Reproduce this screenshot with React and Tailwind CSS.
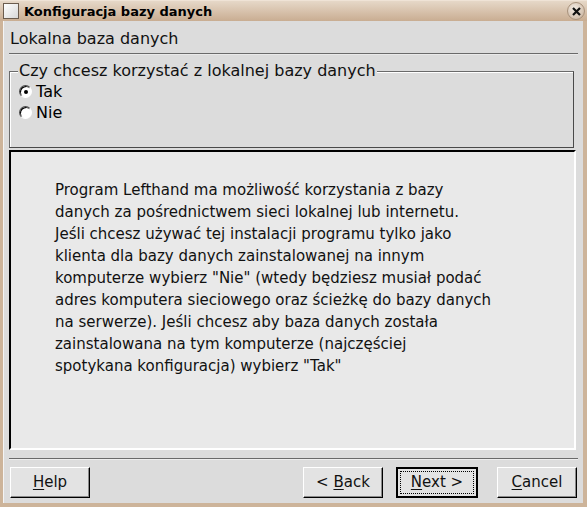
const Radio = ({ checked, label }) => (
  <div className="flex h-[21px] items-center gap-[4px]">
    <span className="relative flex h-[13px] w-[13px] items-center justify-center rounded-full border border-t-[#4a4a4a] border-l-[#4a4a4a] border-r-white border-b-white bg-white shadow-[inset_1px_1px_0_#000]">
      {checked && <span className="h-[4px] w-[4px] rounded-full bg-black" />}
    </span>
    <span className="text-[16px] leading-none text-black">{label}</span>
  </div>
);

const Button = ({ children, isDefault = false, className = "" }) => (
  <button
    type="button"
    className={`flex h-[31px] items-center justify-center bg-[#e3e3e3] text-[15px] text-[#111] ${
      isDefault
        ? "border-2 border-black p-[2px]"
        : "border border-t-white border-l-white border-r-black border-b-black shadow-[inset_-1px_-1px_0_#8a8a8a]"
    } ${className}`}
  >
    {isDefault ? (
      <span className="flex h-full w-full items-center justify-center border border-dotted border-black">
        {children}
      </span>
    ) : (
      children
    )}
  </button>
);

const Label = ({ u, rest, before = "" }) => (
  <span>
    {before}
    <span className="underline underline-offset-2">{u}</span>
    {rest}
  </span>
);

const lines = [
  "Program Lefthand ma możliwość korzystania z bazy",
  "danych za pośrednictwem sieci lokalnej lub internetu.",
  "Jeśli chcesz używać tej instalacji programu tylko jako",
  "klienta dla bazy danych zainstalowanej na innym",
  "komputerze wybierz \"Nie\" (wtedy będziesz musiał podać",
  "adres komputera sieciowego oraz ścieżkę do bazy danych",
  "na serwerze). Jeśli chcesz aby baza danych została",
  "zainstalowana na tym komputerze (najczęściej",
  "spotykana konfiguracja) wybierz \"Tak\"",
];

export default function App() {
  return (
    <div
      className="flex h-[507px] w-[587px] flex-col bg-[#cdb49a]"
      style={{ fontFamily: '"DejaVu Sans", "Liberation Sans", sans-serif' }}
    >
      {/* title bar */}
      <div className="flex h-[21px] shrink-0 items-center border-t border-[#efe3d6] bg-[linear-gradient(#e6d8c8,#c9ad92)] pl-[3px] pr-[2px]">
        <span className="h-[16px] w-[16px] border border-[#6b5c4e] bg-[linear-gradient(135deg,#ffffff,#d8d8d8)]" />
        <span className="ml-[5px] text-[13px] font-bold leading-none text-black">
          Konfiguracja bazy danych
        </span>
        <span className="ml-auto flex h-[18px] w-[18px] items-center justify-center rounded-full border border-[#a8927c] bg-[radial-gradient(circle_at_40%_35%,#f3ece4,#c4ad97)]">
          <svg width="9" height="9" viewBox="0 0 9 9">
            <path d="M1 1L8 8M8 1L1 8" stroke="#111" strokeWidth="2.2" />
          </svg>
        </span>
      </div>

      {/* body */}
      <div className="mb-[4px] ml-[3px] mr-[4px] flex flex-1 flex-col border-l border-[#f4f4f4] bg-[#dcdcdc] px-[5px]">
        <div className="pl-[1px] pt-[9px] text-[16px] leading-[18px] text-[#111]">
          Lokalna baza danych
        </div>
        <div className="mt-[5px] h-[2px] border-t border-[#6a6a6a] bg-white/40" />

        {/* group box */}
        <div className="relative mr-[4px] mt-[16px] h-[77px] border border-t-[#6a6a6a] border-l-[#6a6a6a] border-r-[#4a4a4a] border-b-[#4a4a4a] shadow-[inset_1px_1px_0_#ffffff]">
          <span className="absolute -top-[10px] left-[8px] bg-[#dcdcdc] px-[1px] text-[16px] leading-[18px] text-[#111]">
            Czy chcesz korzystać z lokalnej bazy danych
          </span>
          <div className="flex flex-col pl-[9px] pt-[9px]">
            <Radio checked label="Tak" />
            <Radio label="Nie" />
          </div>
        </div>

        {/* text panel */}
        <div className="mr-[2px] mt-[2px] h-[300px] border-2 border-t-black border-l-black border-r-white border-b-white bg-[#e9e9e9] pl-[44px] pt-[27px]">
          {lines.map((line) => (
            <div key={line} className="whitespace-pre text-[15px] leading-[22px] text-[#111]">
              {line}
            </div>
          ))}
        </div>

        <div className="mt-[8px] h-[2px] border-t border-[#6a6a6a] bg-white/50" />

        <div className="mt-[7px] flex items-center">
          <Button className="ml-[1px] w-[80px]">
            <Label u="H" rest="elp" />
          </Button>
          <Button className="ml-auto w-[80px]">
            <Label before="< " u="B" rest="ack" />
          </Button>
          <Button isDefault className="ml-[13px] w-[82px]">
            <Label u="N" rest="ext >" />
          </Button>
          <Button className="ml-[19px] mr-[1px] w-[80px]">
            <Label u="C" rest="ancel" />
          </Button>
        </div>
      </div>
    </div>
  );
}
